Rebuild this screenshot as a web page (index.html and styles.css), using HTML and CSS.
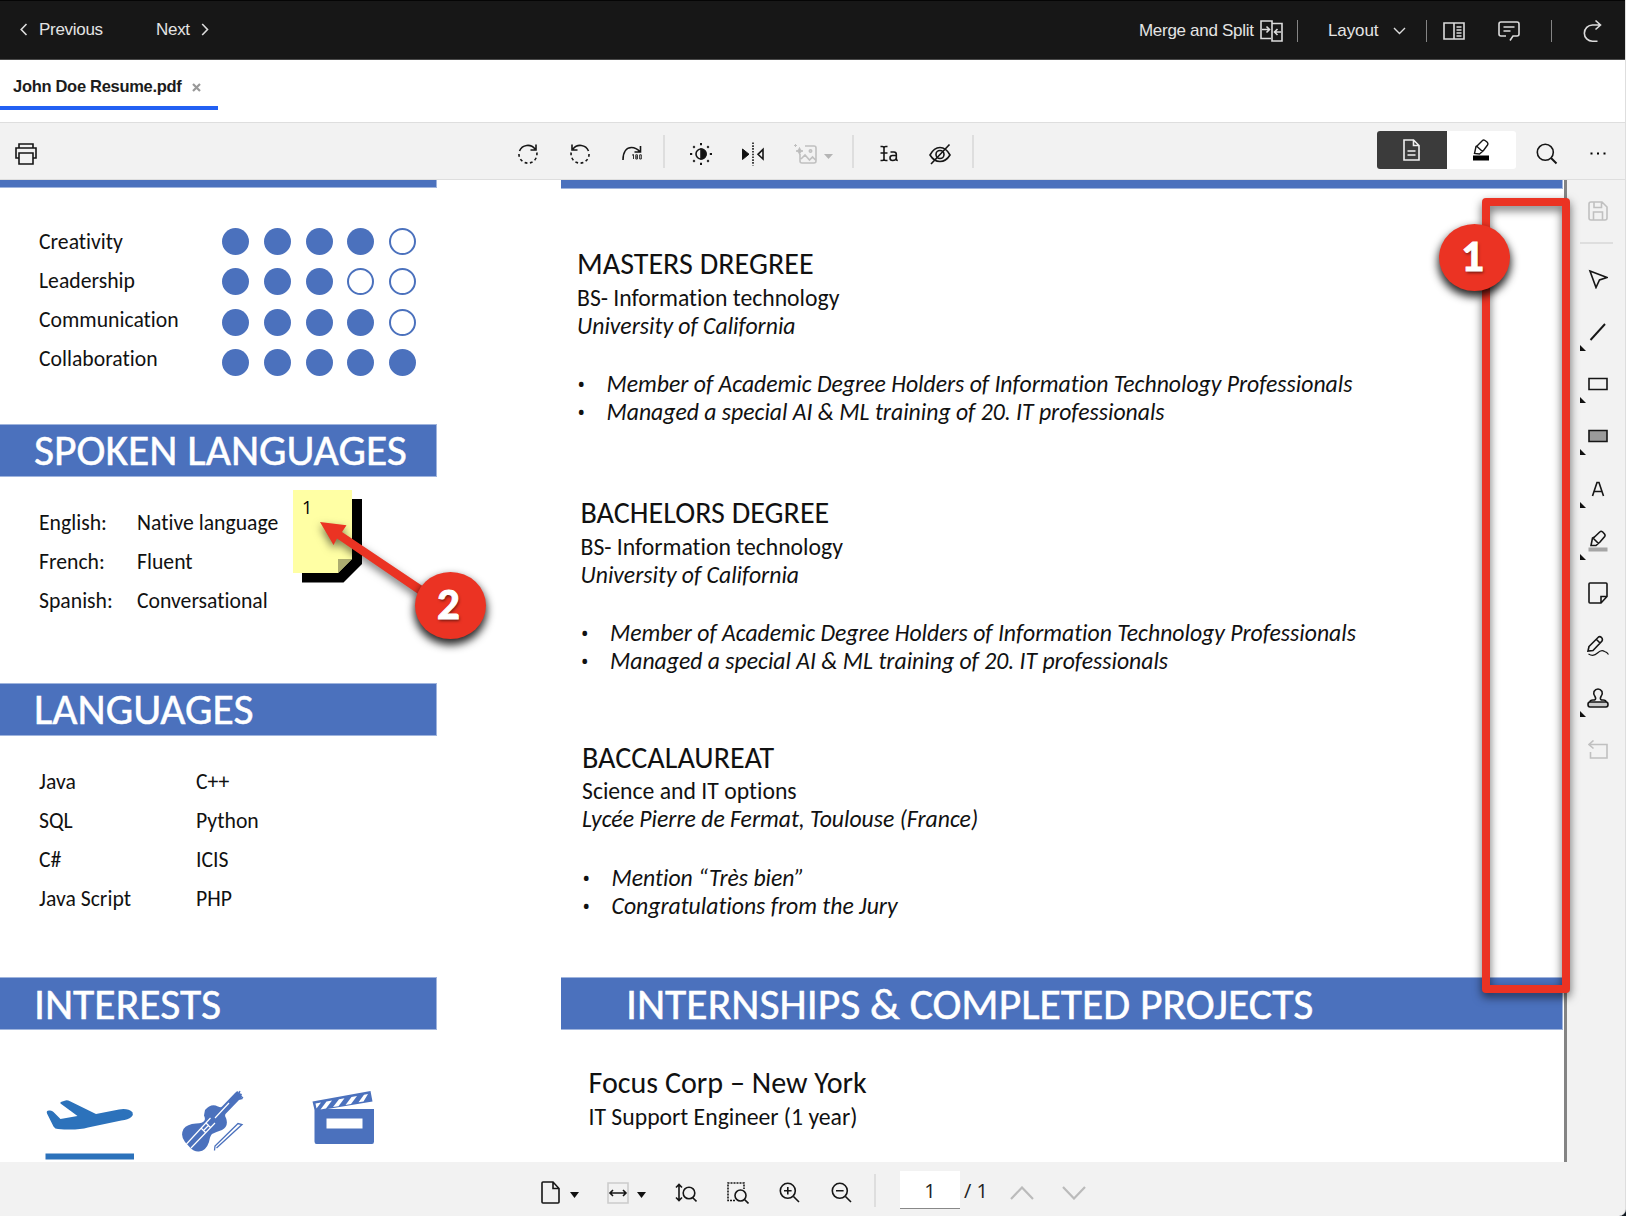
FILE: index.html
```html
<!DOCTYPE html>
<html lang="en">
<head>
<meta charset="utf-8">
<title>John Doe Resume.pdf</title>
<link rel="stylesheet" href="styles.css">
</head>
<body>
<div class="app">
  <header class="topbar">
    <svg class="chev" width="8" height="13" viewBox="0 0 8 13"><path d="M6.500 1 1.200 6.500l5.300 5.500"/></svg>
    <span class="t-prev">Previous</span>
    <span class="t-next">Next</span>
    <svg class="chev" width="8" height="13" viewBox="0 0 8 13"><path d="M1.200 1l5.300 5.500L1.200 12"/></svg>
    <span class="spacer"></span>
    <span class="t-merge">Merge and Split</span>
    <svg class="i-merge" width="23" height="22" viewBox="0 0 23 22"><path d="M12 4.500V1H1v17.500h10M12 3.500h10V21H12zM2 9.500h7M6.500 6.500l3 3-3 3M21 12h-6M17.500 9l-3 3 3 3"/></svg>
    <i class="bar"></i>
    <span class="t-layout">Layout</span>
    <svg class="i-down" width="13" height="8" viewBox="0 0 13 8"><path d="M1 1l5.500 5.500L12 1"/></svg>
    <i class="bar bar2"></i>
    <svg class="i-panel" width="22" height="18" viewBox="0 0 22 18"><path d="M1 1h20v16H1zM11 1v16M13.500 5h5M13.500 8h5M13.500 11h5M13.500 14h5"/></svg>
    <svg class="i-comment" width="22" height="22" viewBox="0 0 22 22"><path d="M8 16H3q-2 0-2-2V4q0-2 2-2h16q2 0 2 2v10q0 2-2 2h-4l-3 4.500M5.500 7h11M5.500 11h7"/></svg>
    <i class="bar bar3"></i>
    <svg class="i-redo" width="19" height="24" viewBox="0 0 19 24"><path d="M12.500 1.500 17.500 6l-5 4.500M17 6h-7.500a8 8 0 1 0 0 16.300h5"/></svg>
  </header>

  <nav class="tabs"><div class="tab"><span>John Doe Resume.pdf</span><svg width="9" height="9" viewBox="0 0 9 9"><path d="M1 1l7 7M8 1 1 8"/></svg></div></nav>

  <div class="toolbar">
    <svg class="ic i-print" width="22" height="22" viewBox="0 0 22 22"><path d="M4 5V1h14v4M4 15H1V5h20v10h-3M4 10h14v11H4z"/></svg>
    <div class="tools">
      <svg class="ic" width="22" height="22" viewBox="0 0 22 22"><path d="M2.500 8A9 9 0 0 1 18 6M19 1.500V7h-5.500"/><path stroke-dasharray="2.800 2.600" d="M19.800 9.500A9 9 0 1 1 2.200 9"/></svg>
      <svg class="ic" width="22" height="22" viewBox="0 0 22 22"><path d="M19.500 8A9 9 0 0 0 4 6M3 1.500V7h5.500"/><path stroke-dasharray="2.800 2.600" d="M2.200 9.500A9 9 0 1 0 19.800 9"/></svg>
      <svg class="ic" width="22" height="22" viewBox="0 0 22 22"><path d="M2 17C2 8 6 4.500 10.500 4.500c3.500 0 6 1.500 8.500 4.300M19.500 3v6h-6"/><path stroke-width=".9" d="M12.500 11.500v4.500M11 12.200l1.500-.7M14.800 11.800h1.600v4.200h-1.600zM14.800 14h1.600M18.700 11.800h1.600v4.200h-1.600z"/></svg>
      <i class="vline"></i>
      <svg class="ic" width="22" height="22" viewBox="0 0 22 22"><circle cx="11" cy="11" r="5"/><path fill="#111" d="M11 6a5 5 0 0 1 0 10z"/><path stroke-width="2" d="M11 0v2.200M11 19.800V22M0 11h2.200M19.800 11H22M3.300 3.300l1.400 1.400M17.300 17.300l1.400 1.400M3.300 18.700l1.400-1.400M17.300 4.700l1.400-1.400"/></svg>
      <svg class="ic" width="22" height="24" viewBox="0 0 22 24"><path fill="#111" stroke-width="1" d="M.500 7v10.500L7 12.200z"/><path d="M21 7.500v9.500l-5-4.700z"/><path stroke-dasharray="1.600 1.200" d="M11 .500v23"/></svg>
      <svg class="ic off i-enh" width="24" height="22" viewBox="0 0 24 22"><path d="M11 3h9q2 0 2 2v13q0 2-2 2H8q-2 0-2-2v-7M7 16l4-4 4.500 5 3-3 3.500 3.500"/><circle cx="16.500" cy="8" r="1.200"/><path fill="#bbb" stroke-width="1" d="M5.500 4.500l1 2.500 2.500 1-2.500 1-1 2.500-1-2.500L2 8l2.500-1zM1.500 1v3M0 2.500h3"/></svg>
      <svg class="caret off-fill" width="9" height="5" viewBox="0 0 9 5"><path d="M0 0h9L4.500 5z"/></svg>
      <i class="vline v2"></i>
      <svg class="ic i-text" width="20" height="20" viewBox="0 0 20 20"><path d="M1.500 2.500h1.800q1.700 0 1.700 1.500v11q0 1.500-1.700 1.500H1.500M8.500 2.500H6.700Q5 2.500 5 4M8.500 16.500H6.700Q5 16.500 5 15M1.500 9h7"/><path d="M11.500 8h3.500q2.300 0 2.300 2.300v4.500q0 1.700 1.500 1.700M17.300 11.500H13.500q-2.500 0-2.500 2.500t2.500 2.500q3.800 0 3.800-3"/></svg>
      <svg class="ic" width="22" height="22" viewBox="0 0 22 22"><path d="M1 12q4-7.500 10-7.500T21 12q-4 6.500-10 6.500T1 12zM2 21 20.500 1.500"/><circle cx="11" cy="11.500" r="4"/></svg>
      <i class="vline"></i>
    </div>
    <div class="modes">
      <div class="mode dark"><svg class="ic" width="17" height="22" viewBox="0 0 17 22"><path d="M10.500 1H1v20h15V6.500zV6.500H16M4.500 12h8M4.500 16h8"/></svg></div>
      <div class="mode"><svg class="ic" width="18" height="22" viewBox="0 0 18 22"><path stroke-width="1.400" d="M5 7 10.500 1.500Q11.500.500 13 1.500l2 1.500q1.500 1.500.500 3L11.500 11.500 7.500 15l-5-.5L4 7.500zM5 7.500l5.500 5"/><path stroke="none" fill="#000" d="M1 16.500h16V21.500H1z"/></svg></div>
    </div>
    <svg class="ic i-search" width="22" height="22" viewBox="0 0 22 22"><circle cx="9.300" cy="9.300" r="8"/><path stroke-width="1.900" d="M15 15l5.500 5.500"/></svg>
    <svg class="i-dots" width="16" height="3" viewBox="0 0 16 3"><path d="M.500 0.500h2v2h-2zM7 .500h2v2H7zM13.500.500h2v2h-2z"/></svg>
  </div>

  <div class="work">
    <main class="page">
      <div class="left">
        <div class="band top"></div>
        <section class="skills">
          <div class="names"><p>Creativity</p><p>Leadership</p><p>Communication</p><p>Collaboration</p></div>
          <div class="dots">
            <b></b><b></b><b></b><b></b><b class="o"></b>
            <b></b><b></b><b></b><b class="o"></b><b class="o"></b>
            <b></b><b></b><b></b><b></b><b class="o"></b>
            <b></b><b></b><b></b><b></b><b></b>
          </div>
        </section>
        <h2 class="band">SPOKEN LANGUAGES</h2>
        <section class="pairs spoken">
          <p>English:</p><p>Native language</p><p>French:</p><p>Fluent</p><p>Spanish:</p><p>Conversational</p>
        </section>
        <h2 class="band">LANGUAGES</h2>
        <section class="pairs code">
          <p>Java</p><p>C++</p><p>SQL</p><p>Python</p><p>C#</p><p>ICIS</p><p>Java Script</p><p>PHP</p>
        </section>
        <h2 class="band low">INTERESTS</h2>
        <section class="interests">
          <svg width="90" height="60" viewBox="0 0 90 60"><path fill="#2c72bb" d="M2 13.500q-1-3 2-3 3-.5 4.500 1.500l7 7 17-3L15.500 3.500q-.8-1.200 1-1.700l4-1.300q2-.5 4.500.8L51 14l23-4.500q9-1.500 13.500 2.800 1.200 2.200-1.200 4.700-3 2.500-10 3.500L43 27.500q-11 3-30 1.500-3 0-4.500-2.500zM.500 53.500H89v6H.500z"/></svg>
          <svg width="62" height="62" viewBox="0 0 62 62"><path fill="#4b71bd" d="M23 20q6-7 13-3.500 3 1.500 4 0L53 3 56 1l1 2 3 1-1 3 2 2-4 1L43.500 24q-1 2 .5 4 3 8-4 12-6 2-10 4-2 2-3 8-3 9-10 9.500-5 .5-9-4L3 52q-5-6-1.500-13Q5 34 14 33.500q7 0 8.500-3 1-2-.5-5 .5-3 1-5.500z"/><path fill="none" stroke="#fff" stroke-width="1.200" d="M4.500 54 28.500 28M9 58 33 33M19 38l5 5M24 33l5 5M22 40l5-5M33 28 47 13"/><path fill="none" stroke="#4b71bd" stroke-width="1.300" d="M32.500 60.500 33 56 56 33.500l4 1L34.500 58M54 2l7 6M58 1l-3 7"/></svg>
          <svg width="63" height="54" viewBox="0 0 63 54"><path fill="#4b71bd" d="M.500 11.500 58.500 1l2 10.500-45 7.500H62v32.500q0 2.500-2 2.500H4.500q-2 0-2-2.500V20z"/><path fill="#fff" d="M14.500 28.500h36v10h-36zM3.500 13.500l5.500-1L4.500 18.500zM14.500 11.500l5.500-1-6 8-5.500.9zM27 9.200l5.500-1-6 8-5.500.9zM39.500 7l5.500-1-6 8-5.500.9zM52 4.700l4-.7-4.500 7.500-5 .8z"/></svg>
        </section>
      </div>
      <div class="right">
        <div class="band top2"></div>
        <section class="degree d1">
          <h3>MASTERS DREGREE</h3>
          <p class="plain">BS- Information technology</p>
          <p class="it">University of California</p>
          <ul><li>Member of Academic Degree Holders of Information Technology Professionals</li><li>Managed a special AI &amp; ML training of 20. IT professionals</li></ul>
        </section>
        <section class="degree d2">
          <h3>BACHELORS DEGREE</h3>
          <p class="plain">BS- Information technology</p>
          <p class="it">University of California</p>
          <ul><li>Member of Academic Degree Holders of Information Technology Professionals</li><li>Managed a special AI &amp; ML training of 20. IT professionals</li></ul>
        </section>
        <section class="degree d3">
          <h3>BACCALAUREAT</h3>
          <p class="plain">Science and IT options</p>
          <p class="it">Lycée Pierre de Fermat, Toulouse (France)</p>
          <ul><li>Mention “Très bien”</li><li>Congratulations from the Jury</li></ul>
        </section>
        <h2 class="band low wide">INTERNSHIPS &amp; COMPLETED PROJECTS</h2>
        <section class="job"><h3>Focus Corp – New York</h3><p class="plain">IT Support Engineer (1 year)</p></section>
      </div>
    </main>
    <aside class="side">
      <div class="cell save"><svg class="ic off" width="20" height="20" viewBox="0 0 20 20"><path d="M1 3q0-2 2-2h11l5 5v11q0 2-2 2H3q-2 0-2-2zM6 1v5.500h7.500V1M5.500 19v-8h9v8"/></svg></div>
      <div class="cell"><svg class="ic" width="20" height="20" viewBox="0 0 20 20"><path d="M2 2l17 6.500-7.500 2.500L8 18.500z"/></svg></div>
      <div class="cell more"><svg class="ic" width="20" height="20" viewBox="0 0 20 20"><path stroke-width="1.900" d="M2.500 18 17 2"/></svg></div>
      <div class="cell more"><svg class="ic" width="20" height="20" viewBox="0 0 20 20"><path d="M1 4.500h18v11H1z"/></svg></div>
      <div class="cell more"><svg class="ic" width="20" height="20" viewBox="0 0 20 20"><path fill="#9b9b9b" d="M1 4.500h18v11H1z"/></svg></div>
      <div class="cell more"><svg class="ic" width="20" height="20" viewBox="0 0 20 20"><path d="M4.500 17 9 3.500h2L15.500 17M6 12.500h8"/></svg></div>
      <div class="cell more"><svg class="ic" width="20" height="22" viewBox="0 0 20 22"><path d="M6.500 7 12 1.800q1-1 2.500 0L16.500 4q1 1.200.2 2.500L12 12l-4 3.500H3L4.500 8zM5.500 8.500l5 5"/><path stroke="none" fill="#a5a5a5" d="M.500 17.500h19v4H.500z"/></svg></div>
      <div class="cell"><svg class="ic" width="20" height="22" viewBox="0 0 20 22"><path d="M1 2q0-1 1-1h16q1 0 1 1v12.500L13 21H2q-1 0-1-1zM13 21v-6.500h6"/></svg></div>
      <div class="cell"><svg class="ic" width="22" height="22" viewBox="0 0 22 22"><path d="M2 11.500 11.500 2q1.500-1 3 .5T15 6L6 15.500l-5 .5zM9.500 4.500l3.500 3.500"/><path stroke-width="1.200" d="M1.500 19q5 3 9-1t7-1.500q2.500.5 4 3"/></svg></div>
      <div class="cell more"><svg class="ic" width="22" height="20" viewBox="0 0 22 20"><path fill="#ccc" d="M3 14h16q2 0 2 2.500T19 19H3q-2 0-2-2.500T3 14z"/><path d="M3 14q0-2 3-2h1.500Q9.500 11 8 8.500 6 6 7 3.500 8.500 1 11 1t4 2.500Q16 6 14 8.500q-1.500 2.500.5 3.500H16q3 0 3 2"/></svg></div>
      <div class="cell"><svg class="ic off" width="20" height="20" viewBox="0 0 20 20"><path d="M5.500.500 1 4.500l4.500 4M1 4.500h18V18H2.500v-6"/></svg></div>
    </aside>
  </div>

  <footer class="bottom">
    <svg class="ic b1" width="19" height="23" viewBox="0 0 19 23"><path d="M12 1H2Q1 1 1 2v19q0 1 1 1h15q1 0 1-1V7.500zV7.500h6"/></svg>
    <svg class="caret b2" width="9" height="6" viewBox="0 0 9 6"><path d="M0 0h9L4.500 6z"/></svg>
    <svg class="ic b3" width="22" height="22" viewBox="0 0 22 22"><path stroke="#ccc" d="M1 1h20v20H1z"/><path d="M3 11h16M6 8l-3 3 3 3M16 8l3 3-3 3"/></svg>
    <svg class="caret b4" width="9" height="6" viewBox="0 0 9 6"><path d="M0 0h9L4.500 6z"/></svg>
    <svg class="ic b5" width="22" height="20" viewBox="0 0 22 20"><path d="M4 2v15M1 4.500 4 1.500l3 3M1 14.500l3 3 3-3M17.500 14.500l4 4"/><circle cx="14" cy="10" r="5.800"/></svg>
    <svg class="ic b6" width="22" height="22" viewBox="0 0 22 22"><path stroke-dasharray="2 1" d="M8 18.500H1V1h16v6"/><circle cx="13.500" cy="13.500" r="5.500"/><path d="M17.500 17.500l4 4"/></svg>
    <svg class="ic b7" width="21" height="21" viewBox="0 0 21 21"><circle cx="8.800" cy="8.800" r="7.500"/><path d="M14.500 14.500l5.500 5.500M5 8.800h7.600M8.800 5v7.600"/></svg>
    <svg class="ic b8" width="21" height="21" viewBox="0 0 21 21"><circle cx="8.800" cy="8.800" r="7.500"/><path d="M14.500 14.500l5.500 5.500M5 8.800h7.600"/></svg>
    <i class="vline b9"></i>
    <span class="num">1</span><span class="of">/ 1</span>
    <svg class="nav" width="24" height="14" viewBox="0 0 24 14"><path d="M1 13 12 1.500 23 13"/></svg>
    <svg class="nav n2" width="24" height="14" viewBox="0 0 24 14"><path d="M1 1l11 11.500L23 1"/></svg>
  </footer>

  <svg class="note" width="80" height="100" viewBox="0 0 80 100"><path d="M9 9h60v65L50.500 92.500H9z"/><path fill="#ffffa4" d="M0 0h59v69L45 83H0z"/><path fill="#adad70" d="M45 69h14L45 83z"/></svg>
  <span class="note-num">1</span>
  <svg class="arrow" width="120" height="90" viewBox="0 0 120 90"><path fill="#eb3323" d="M10 10 36.500 13.200 32 20 114 75l-5 7.500L27 26.500 23.500 33z"/></svg>
  <div class="frame"></div>
  <div class="badge one">1</div>
  <div class="badge two">2</div>
</div>
</body>
</html>
```
FILE: styles.css
```css
* { box-sizing: border-box; }
body { margin: 0; background: #101820; font-family: "Open Sans", sans-serif; }
p, h2, h3, ul { margin: 0; padding: 0; font-weight: 400; }
svg { display: block; flex: none; }
.app { position: relative; width: 1626px; height: 1216px; overflow: hidden; background: #f2f2f2; border-right: 1px solid #dedede; border-bottom-right-radius: 7px; display: flex; flex-direction: column; }

.topbar { height: 60px; width: 1626px; flex: none; background: #171717; border-top: 1px solid #050505; border-bottom: 1px solid #4a4a4a; display: flex; align-items: center; padding: 0 24px 1px 20px; font: 17px "Liberation Sans", sans-serif; letter-spacing: -.3px; color: #e4e4e4; white-space: nowrap; }
.topbar svg { fill: none; stroke: #dcdcdc; stroke-width: 1.600; }
.t-prev { margin-left: 11px; width: 117px; }
.t-next { width: 45px; }
.spacer { flex: 1; }
.t-merge { width: 121px; padding-top: 2px; }
.i-merge, .i-down, .i-panel, .i-comment, .i-redo { position: relative; top: 1px; }
.bar { width: 1px; height: 22px; background: #858585; margin: 2px 30px 0 14px; }
.t-layout { width: 65px; padding-top: 3px; letter-spacing: -.1px; }
.topbar .i-down { stroke-width: 1.400; }
.bar2 { margin: 2px 16px 0 20px; }
.i-panel { margin-right: 33px; }
.bar3 { margin: 2px 31px 0 31px; }

.tabs { height: 62px; flex: none; background: #fff; }
.tab { width: 218px; height: 50px; border-bottom: 4px solid #2260f3; padding: 7px 0 0 13px; display: flex; align-items: center; font: bold 16.500px "Liberation Sans", sans-serif; letter-spacing: -.3px; color: #1c1c1c; white-space: nowrap; }
.tab span { width: 179px; }
.tab svg { margin-top: 2px; stroke: #999; stroke-width: 2.200; }

.toolbar { height: 58px; flex: none; background: #f2f2f2; border-top: 1px solid #dedede; border-bottom: 1px solid #dedede; display: flex; align-items: center; padding: 5px 19px 0 15px; }
.ic { fill: none; stroke: #161616; stroke-width: 1.600; }
.off { stroke: #c0c0c0; }
.caret { fill: #111; }
.off-fill { fill: #b5b5b5; }
.tools { display: flex; align-items: center; gap: 30px; margin-left: 480px; }
.vline { width: 2px; height: 33px; background: #dedede; margin-top: -5px; }
.tools .vline { margin-left: -10px; margin-right: -5px; }
.tools .v2 { margin-left: -11px; margin-right: -5px; }
.tools .vline:last-child { margin-left: -9px; margin-right: 0; }
.i-enh + .caret { margin: 5px 0 0 -24px; }
.modes { display: flex; width: 139px; height: 38px; margin: -7px 20px 0 auto; border-radius: 3px; overflow: hidden; background: #fff; }
.mode { width: 69.500px; display: flex; align-items: center; justify-content: center; }
.dark { background: #3b3b3b; }
.dark .ic { stroke: #f0f0f0; }
.i-search { margin-right: 32px; }

.work { height: 982px; flex: none; display: flex; }
.page { width: 1567px; flex: none; background: #fff; border-right: 3px solid #848484; display: flex; justify-content: space-between; padding-right: 1px; color: #111; white-space: nowrap; font-family: "Carlito", "Lato", sans-serif; font-variant-ligatures: none; }
.left { width: 437px; }
.right { width: 1002px; }
.band { height: 53px; background: #4b71bd; border: 1px solid #9fb4dd; border-width: 1px 1px 1px 0; color: #fff; font-size: 43.600px; line-height: 51px; padding-left: 34px; -webkit-text-stroke: .5px #fff; }
.band.top { height: 8px; border-top: 0; }
.band.top2 { height: 9px; border-top: 0; }
.low { line-height: 53px; }
.wide { padding-left: 65px; }
.left p { font-size: 21.700px; line-height: 39.300px; }
.skills { height: 236px; display: flex; padding: 33.600px 0 0 39px; }
.names { width: 183px; }
.dots { display: grid; grid-template-columns: repeat(5, 27px); grid-auto-rows: 27px; gap: 13.400px 14.800px; padding-top: 6.500px; align-content: start; }
.dots b { background: #4b71bd; border-radius: 50%; }
.dots .o { background: #fff; border: 2px solid #4b71bd; }
.pairs { display: grid; grid-auto-rows: 39.300px; padding: 25.600px 0 0 39px; }
.spoken { height: 206px; grid-template-columns: 98px auto; justify-content: start; }
.code { height: 241px; grid-template-columns: 157px auto; justify-content: start; }
.interests { display: flex; align-items: flex-start; padding: 60px 0 0 45px; }
.interests svg + svg { margin-left: 47px; }
.interests svg + svg + svg { margin-left: 68px; }
.interests svg:first-child { margin-top: 10px; }

h3 { font-size: 30.100px; line-height: 35px; }
.plain, .it, li { font-size: 23.700px; line-height: 28.300px; }
.it, li { font-style: italic; }
.plain { margin-top: 2.500px; }
ul { list-style: none; margin-top: 30px; }
li { display: flex; }
li::before { content: "•"; font: 22.500px/28.300px "Open Sans", sans-serif; width: 29.500px; }
.degree { padding-left: 16px; }
.d1 { padding-top: 57px; height: 306px; }
.d2 { padding-left: 19.500px; height: 244.500px; }
.d3 { padding-left: 21px; height: 237.500px; }
.job { padding: 35px 0 0 27.500px; }

.side { width: 58px; }
.cell { position: relative; height: 52.350px; display: flex; align-items: center; justify-content: center; padding-left: 4px; }
.save { height: 64px; border-bottom: 2px solid #dedede; margin: 0 12px 9px 13px; padding: 0 0 0 3px; }
.more::before { content: ""; position: absolute; left: 13px; bottom: 7px; border: 3px solid transparent; border-left-color: #111; border-bottom-color: #111; }

.bottom { height: 54px; flex: none; display: flex; align-items: center; padding: 7px 0 0 541px; font-size: 20px; color: #222; }
.b2 { margin: 5px 0 0 10px; }
.b3 { margin-left: 28px; }
.b4 { margin: 5px 0 0 8px; }
.b5 { margin-left: 29px; }
.b6 { margin-left: 30px; }
.b7 { margin-left: 30px; }
.b8 { margin-left: 31px; }
.b9 { margin-left: 22px; }
.num { width: 60px; height: 38px; margin: -6px 0 0 24px; background: #fff; border-bottom: 1px solid #888; text-align: center; line-height: 39px; }
.of { width: 52px; padding-left: 4px; margin-top: -5px; }
.num + .of + .nav { margin-left: -2px; }
.nav { fill: none; stroke: #bbb; stroke-width: 2.200; }
.n2 { margin-left: 28px; }

.note { position: absolute; left: 293px; top: 490px; }
.note-num { position: absolute; left: 302px; top: 495px; font-size: 18px; line-height: 25px; }
.arrow { position: absolute; left: 310px; top: 512px; filter: drop-shadow(0 4px 4px rgba(0,0,0,.55)); }
.frame { position: absolute; left: 1482px; top: 198px; width: 88px; height: 795px; border: 8px solid #eb3323; border-radius: 4px; filter: drop-shadow(0 4px 5px rgba(0,0,0,.6)); }
.badge { position: absolute; width: 71px; height: 67px; border-radius: 50%; background: #eb3323; color: #fff; font: 700 45px/63px "Carlito", "Open Sans", sans-serif; text-align: center; padding-right: 4px; box-shadow: 0 5px 9px 1px rgba(0,0,0,.85); text-shadow: 1px 2px 3px rgba(0,0,0,.5); -webkit-text-stroke: 1px #fff; }
.one { left: 1439px; top: 224px; }
.two { left: 415px; top: 572px; }
```
